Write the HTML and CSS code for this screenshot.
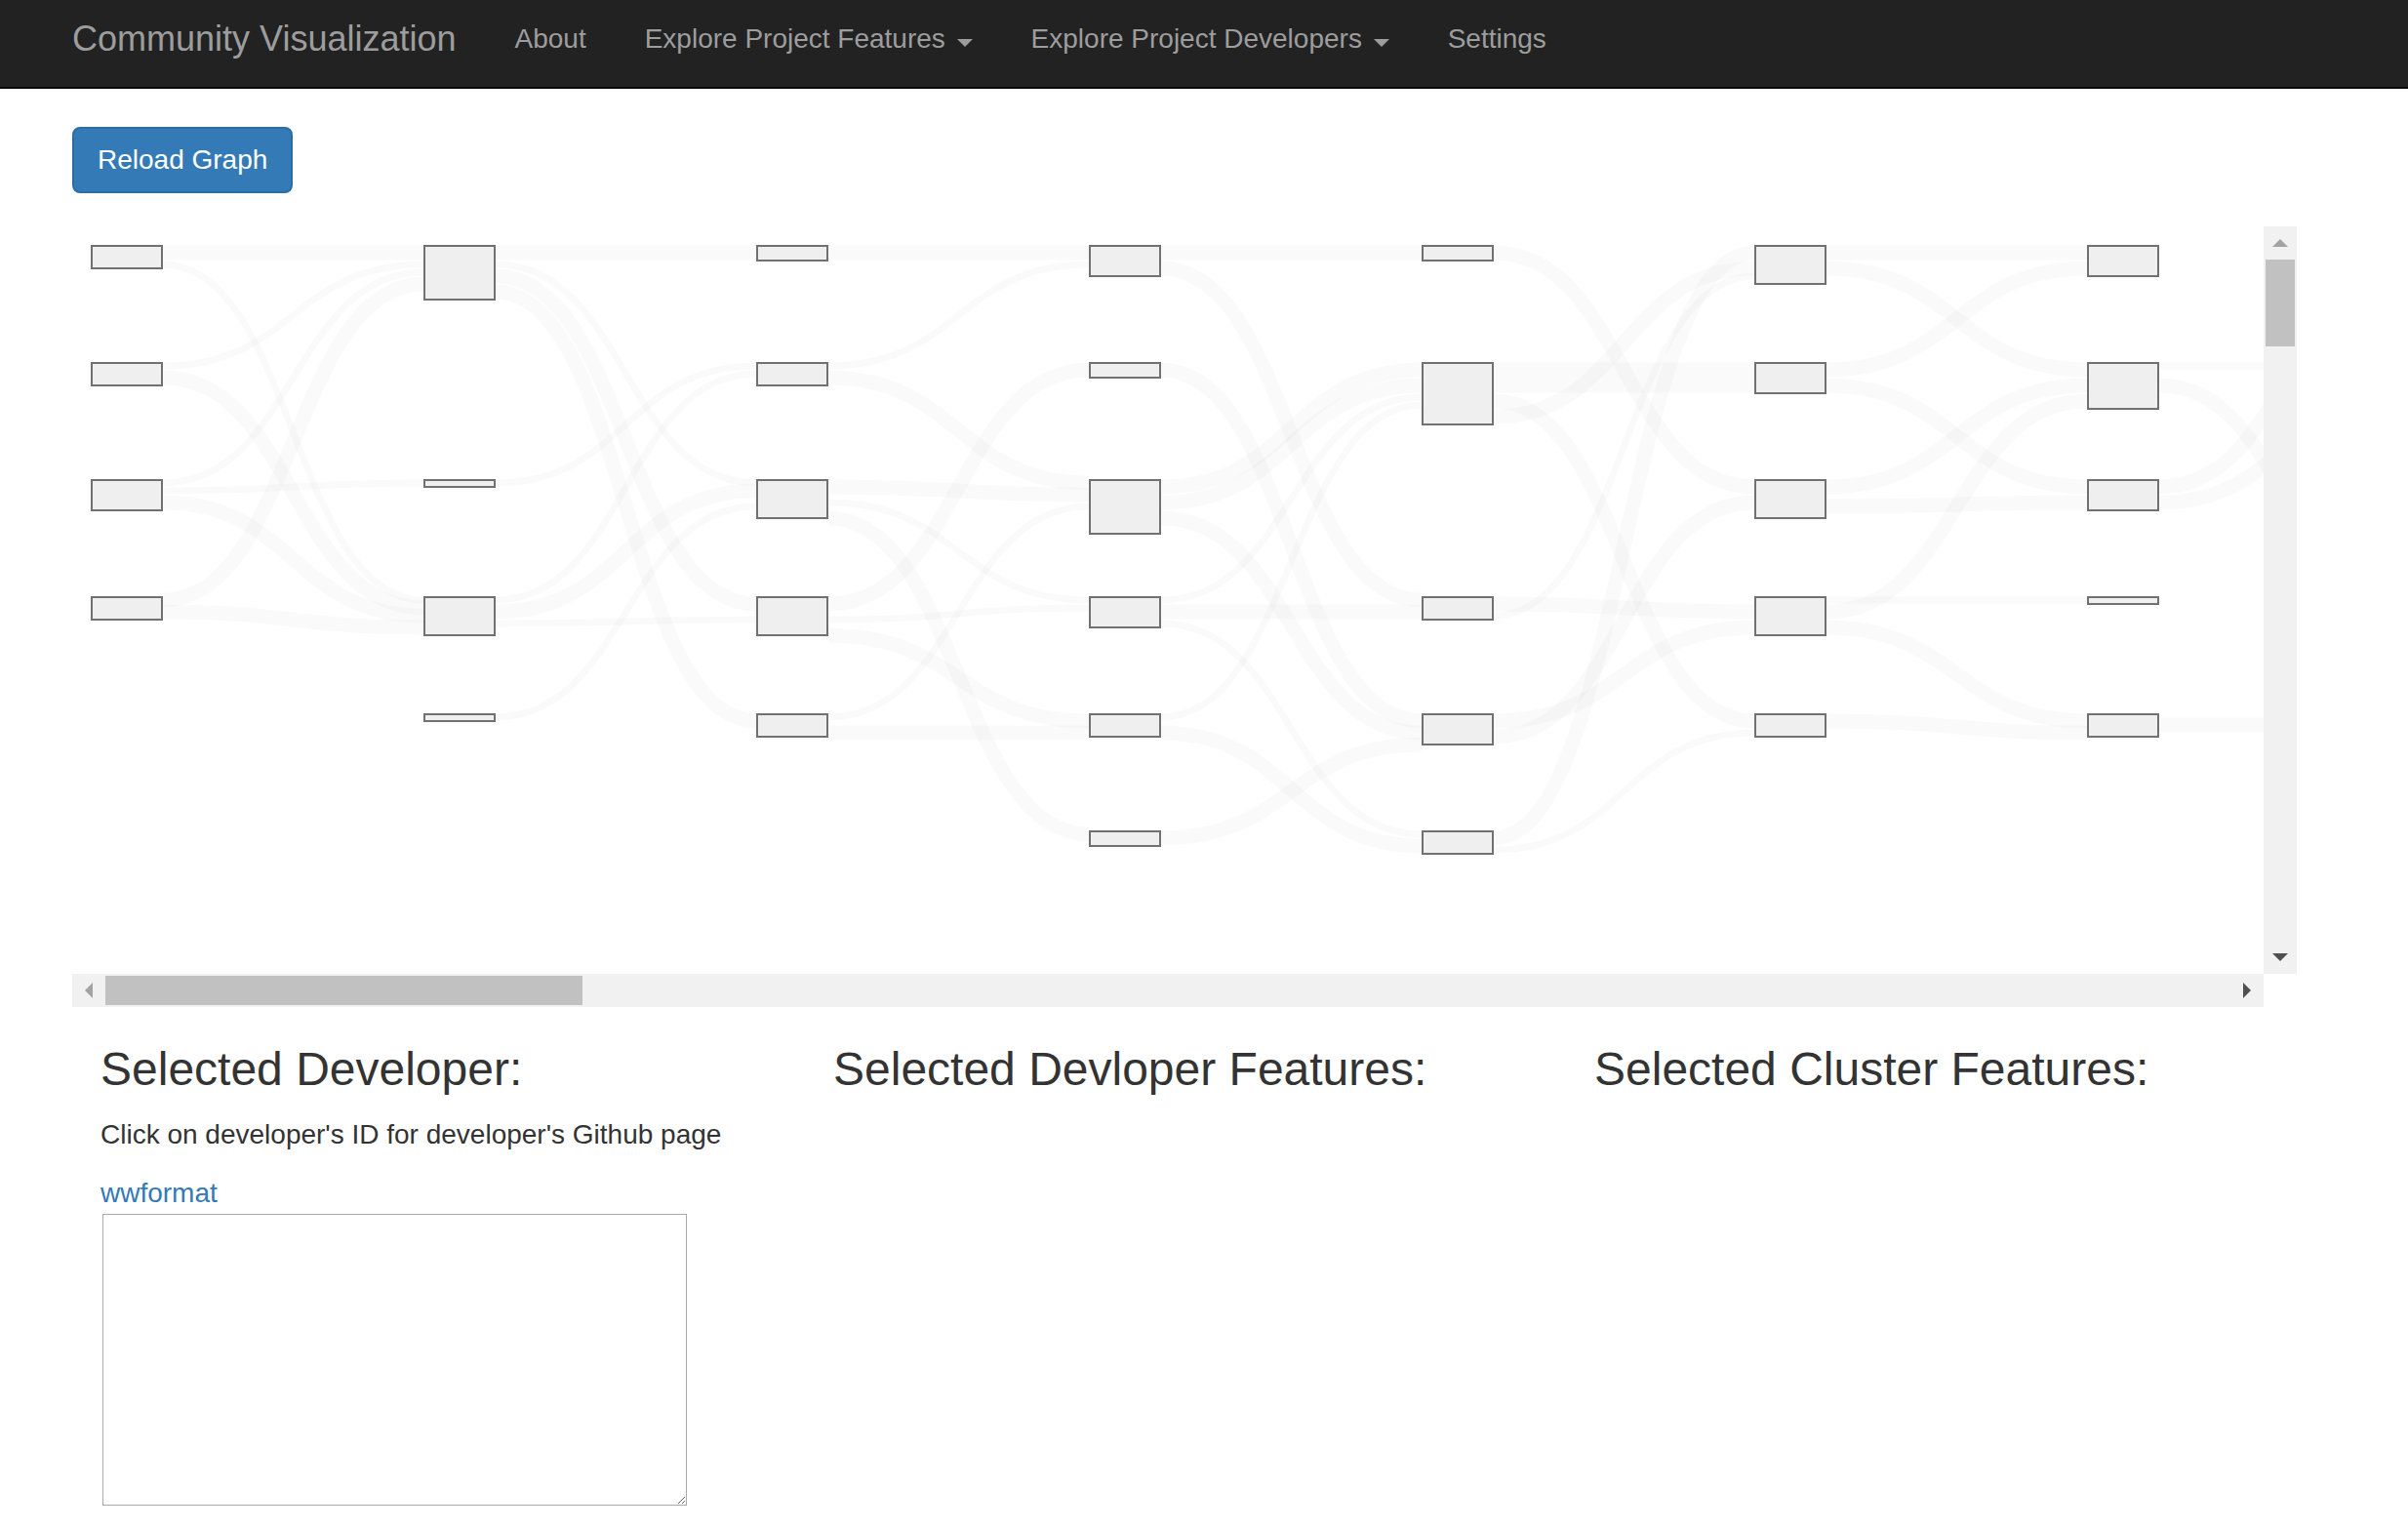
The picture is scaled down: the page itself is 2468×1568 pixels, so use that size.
FILE: index.html
```html
<!DOCTYPE html>
<html lang="en">
<head>
<meta charset="utf-8">
<title>Community Visualization</title>
<link rel="stylesheet" href="styles.css">
</head>
<body>
<nav class="navbar">
  <a class="brand" href="#">Community Visualization</a>
  <ul class="nav">
    <li><a href="#">About</a></li>
    <li><a href="#">Explore Project Features <span class="caret"></span></a></li>
    <li><a href="#">Explore Project Developers <span class="caret"></span></a></li>
    <li><a href="#">Settings</a></li>
  </ul>
</nav>

<main class="main">
  <button class="btn" type="button">Reload Graph</button>

  <div class="graph">
    <div class="viewport">
      <svg class="graph-svg" width="2246" height="766" viewBox="74 232 2246 766">
        <g class="links" fill="none" stroke="#000" stroke-opacity="0.02">
          <path d="M167 259C300.5 259 300.5 259 434 259" stroke-width="15"/>
          <path d="M167 271C300.5 271 300.5 615 434 615" stroke-width="7"/>
          <path d="M167 375C300.5 375 300.5 271 434 271" stroke-width="7"/>
          <path d="M167 387C300.5 387 300.5 623 434 623" stroke-width="15"/>
          <path d="M167 495C300.5 495 300.5 279 434 279" stroke-width="7"/>
          <path d="M167 503C300.5 503 300.5 495 434 495" stroke-width="7"/>
          <path d="M167 515C300.5 515 300.5 631 434 631" stroke-width="15"/>
          <path d="M167 615C300.5 615 300.5 291 434 291" stroke-width="15"/>
          <path d="M167 627C300.5 627 300.5 643 434 643" stroke-width="15"/>

          <path d="M508 259C641.5 259 641.5 259 775 259" stroke-width="15"/>
          <path d="M508 271C641.5 271 641.5 495 775 495" stroke-width="7"/>
          <path d="M508 283C641.5 283 641.5 619 775 619" stroke-width="15"/>
          <path d="M508 299C641.5 299 641.5 739 775 739" stroke-width="15"/>
          <path d="M508 495C641.5 495 641.5 375 775 375" stroke-width="7"/>
          <path d="M508 615C641.5 615 641.5 383 775 383" stroke-width="7"/>
          <path d="M508 627C641.5 627 641.5 503 775 503" stroke-width="15"/>
          <path d="M508 639C641.5 639 641.5 635 775 635" stroke-width="7"/>
          <path d="M508 735C641.5 735 641.5 519 775 519" stroke-width="7"/>

          <path d="M849 259C982.5 259 982.5 259 1116 259" stroke-width="15"/>
          <path d="M849 375C982.5 375 982.5 271 1116 271" stroke-width="7"/>
          <path d="M849 387C982.5 387 982.5 495 1116 495" stroke-width="15"/>
          <path d="M849 499C982.5 499 982.5 507 1116 507" stroke-width="15"/>
          <path d="M849 515C982.5 515 982.5 615 1116 615" stroke-width="7"/>
          <path d="M849 531C982.5 531 982.5 855 1116 855" stroke-width="15"/>
          <path d="M849 619C982.5 619 982.5 379 1116 379" stroke-width="15"/>
          <path d="M849 635C982.5 635 982.5 623 1116 623" stroke-width="7"/>
          <path d="M849 651C982.5 651 982.5 739 1116 739" stroke-width="15"/>
          <path d="M849 735C982.5 735 982.5 519 1116 519" stroke-width="7"/>
          <path d="M849 751C982.5 751 982.5 751 1116 751" stroke-width="15"/>

          <path d="M1190 259C1323.5 259 1323.5 259 1457 259" stroke-width="15"/>
          <path d="M1190 275C1323.5 275 1323.5 615 1457 615" stroke-width="15"/>
          <path d="M1190 379C1323.5 379 1323.5 739 1457 739" stroke-width="15"/>
          <path d="M1190 499C1323.5 499 1323.5 379 1457 379" stroke-width="15"/>
          <path d="M1190 515C1323.5 515 1323.5 395 1457 395" stroke-width="15"/>
          <path d="M1190 531C1323.5 531 1323.5 751 1457 751" stroke-width="15"/>
          <path d="M1190 615C1323.5 615 1323.5 407 1457 407" stroke-width="7"/>
          <path d="M1190 627C1323.5 627 1323.5 627 1457 627" stroke-width="15"/>
          <path d="M1190 639C1323.5 639 1323.5 855 1457 855" stroke-width="7"/>
          <path d="M1190 735C1323.5 735 1323.5 415 1457 415" stroke-width="7"/>
          <path d="M1190 751C1323.5 751 1323.5 867 1457 867" stroke-width="15"/>
          <path d="M1190 859C1323.5 859 1323.5 763 1457 763" stroke-width="15"/>

          <path d="M1531 259C1664.5 259 1664.5 499 1798 499" stroke-width="15"/>
          <path d="M1531 387C1664.5 387 1664.5 387 1798 387" stroke-width="31"/>
          <path d="M1531 411C1664.5 411 1664.5 739 1798 739" stroke-width="15"/>
          <path d="M1531 427C1664.5 427 1664.5 275 1798 275" stroke-width="15"/>
          <path d="M1531 619C1664.5 619 1664.5 627 1798 627" stroke-width="15"/>
          <path d="M1531 631C1664.5 631 1664.5 283 1798 283" stroke-width="7"/>
          <path d="M1531 739C1664.5 739 1664.5 643 1798 643" stroke-width="15"/>
          <path d="M1531 755C1664.5 755 1664.5 515 1798 515" stroke-width="15"/>
          <path d="M1531 859C1664.5 859 1664.5 259 1798 259" stroke-width="15"/>
          <path d="M1531 871C1664.5 871 1664.5 751 1798 751" stroke-width="7"/>

          <path d="M1872 259C2005.5 259 2005.5 259 2139 259" stroke-width="15"/>
          <path d="M1872 275C2005.5 275 2005.5 379 2139 379" stroke-width="15"/>
          <path d="M1872 379C2005.5 379 2005.5 275 2139 275" stroke-width="15"/>
          <path d="M1872 395C2005.5 395 2005.5 499 2139 499" stroke-width="15"/>
          <path d="M1872 499C2005.5 499 2005.5 395 2139 395" stroke-width="15"/>
          <path d="M1872 519C2005.5 519 2005.5 515 2139 515" stroke-width="15"/>
          <path d="M1872 615C2005.5 615 2005.5 615 2139 615" stroke-width="7"/>
          <path d="M1872 627C2005.5 627 2005.5 411 2139 411" stroke-width="15"/>
          <path d="M1872 643C2005.5 643 2005.5 739 2139 739" stroke-width="15"/>
          <path d="M1872 739C2005.5 739 2005.5 751 2139 751" stroke-width="15"/>

          <path d="M2213 375C2346.5 375 2346.5 375 2480 375" stroke-width="7"/>
          <path d="M2213 499C2346.5 499 2346.5 267 2480 267" stroke-width="15"/>
          <path d="M2213 515C2346.5 515 2346.5 395 2480 395" stroke-width="15"/>
          <path d="M2213 395C2346.5 395 2346.5 640 2480 640" stroke-width="15"/>
          <path d="M2213 743C2346.5 743 2346.5 743 2480 743" stroke-width="15"/>
        </g>
        <g class="nodes" fill="#efefef" stroke="#717171" stroke-width="2">
          <rect x="94" y="252" width="72" height="23"/>
          <rect x="94" y="372" width="72" height="23"/>
          <rect x="94" y="492" width="72" height="31"/>
          <rect x="94" y="612" width="72" height="23"/>

          <rect x="435" y="252" width="72" height="55"/>
          <rect x="435" y="492" width="72" height="7"/>
          <rect x="435" y="612" width="72" height="39"/>
          <rect x="435" y="732" width="72" height="7"/>

          <rect x="776" y="252" width="72" height="15"/>
          <rect x="776" y="372" width="72" height="23"/>
          <rect x="776" y="492" width="72" height="39"/>
          <rect x="776" y="612" width="72" height="39"/>
          <rect x="776" y="732" width="72" height="23"/>

          <rect x="1117" y="252" width="72" height="31"/>
          <rect x="1117" y="372" width="72" height="15"/>
          <rect x="1117" y="492" width="72" height="55"/>
          <rect x="1117" y="612" width="72" height="31"/>
          <rect x="1117" y="732" width="72" height="23"/>
          <rect x="1117" y="852" width="72" height="15"/>

          <rect x="1458" y="252" width="72" height="15"/>
          <rect x="1458" y="372" width="72" height="63"/>
          <rect x="1458" y="612" width="72" height="23"/>
          <rect x="1458" y="732" width="72" height="31"/>
          <rect x="1458" y="852" width="72" height="23"/>

          <rect x="1799" y="252" width="72" height="39"/>
          <rect x="1799" y="372" width="72" height="31"/>
          <rect x="1799" y="492" width="72" height="39"/>
          <rect x="1799" y="612" width="72" height="39"/>
          <rect x="1799" y="732" width="72" height="23"/>

          <rect x="2140" y="252" width="72" height="31"/>
          <rect x="2140" y="372" width="72" height="47"/>
          <rect x="2140" y="492" width="72" height="31"/>
          <rect x="2140" y="612" width="72" height="7"/>
          <rect x="2140" y="732" width="72" height="23"/>
        </g>
      </svg>
    </div>
    <div class="vbar">
      <div class="sbtn"><span class="arrow arrow-up"></span></div>
      <div class="vthumb"></div>
      <div class="vtrack"></div>
      <div class="sbtn"><span class="arrow arrow-down"></span></div>
    </div>
    <div class="hbar">
      <div class="sbtn"><span class="arrow arrow-left"></span></div>
      <div class="hthumb"></div>
      <div class="htrack"></div>
      <div class="sbtn"><span class="arrow arrow-right"></span></div>
    </div>
    <div class="corner"></div>
  </div>

  <section class="panels">
    <div class="panel">
      <h3>Selected Developer:</h3>
      <p>Click on developer's ID for developer's Github page</p>
      <a class="dev-link" href="#">wwformat</a>
      <textarea class="dev-notes"></textarea>
    </div>
    <div class="panel">
      <h3>Selected Devloper Features:</h3>
    </div>
    <div class="panel">
      <h3>Selected Cluster Features:</h3>
    </div>
  </section>
</main>
</body>
</html>
```

FILE: styles.css
```css
html, body {
  margin: 0;
  padding: 0;
  background: #fff;
}

body {
  font-family: "Liberation Sans", Arial, Helvetica, sans-serif;
  font-size: 28px;
  line-height: 40px;
  color: #333;
  overflow: hidden;
}

/* Navbar */
.navbar {
  display: flex;
  align-items: flex-start;
  height: 69px;
  padding: 20px 0 0 44px;
  background: #222;
  border-bottom: 2px solid #080808;
}

.brand {
  display: block;
  padding: 0 30px;
  font-size: 36px;
  line-height: 40px;
  color: #9d9d9d;
  text-decoration: none;
}

.nav {
  display: flex;
  list-style: none;
  margin: 0;
  padding: 0;
}

.nav a {
  display: block;
  padding: 0 30px;
  font-size: 28px;
  line-height: 40px;
  color: #9d9d9d;
  text-decoration: none;
}

.caret {
  display: inline-block;
  width: 0;
  height: 0;
  margin-left: 4px;
  vertical-align: middle;
  border-top: 8px solid #9d9d9d;
  border-left: 8px solid transparent;
  border-right: 8px solid transparent;
  position: relative;
  top: 2px;
}

/* Main */
.main {
  padding: 39px 0 0 74px;
}

.btn {
  display: block;
  margin: 0;
  padding: 12px 24px;
  font-family: inherit;
  font-size: 28px;
  line-height: 40px;
  color: #fff;
  background: #337ab7;
  border: 2px solid #2e6da4;
  border-radius: 8px;
}

/* Graph with scrollbars */
.graph {
  margin-top: 34px;
  display: grid;
  grid-template-columns: 2246px 34px;
  grid-template-rows: 766px 34px;
}

.viewport {
  overflow: hidden;
  background: #fff;
}

.graph-svg {
  display: block;
}

.vbar {
  display: flex;
  flex-direction: column;
  background: #f1f1f1;
}

.hbar {
  display: flex;
  background: #f1f1f1;
}

.sbtn {
  flex: none;
  width: 34px;
  height: 34px;
  display: flex;
  align-items: center;
  justify-content: center;
}

.vthumb {
  flex: none;
  height: 89px;
  margin: 0 2px;
  background: #c1c1c1;
}

.vtrack,
.htrack {
  flex: 1;
}

.hthumb {
  flex: none;
  width: 489px;
  margin: 2px 0;
  background: #c1c1c1;
}

.corner {
  background: #fff;
}

.arrow {
  display: block;
  width: 0;
  height: 0;
}

.arrow-up {
  border-left: 8px solid transparent;
  border-right: 8px solid transparent;
  border-bottom: 8px solid #a3a3a3;
}

.arrow-down {
  border-left: 8px solid transparent;
  border-right: 8px solid transparent;
  border-top: 8px solid #505050;
}

.arrow-left {
  border-top: 8px solid transparent;
  border-bottom: 8px solid transparent;
  border-right: 8px solid #a3a3a3;
}

.arrow-right {
  border-top: 8px solid transparent;
  border-bottom: 8px solid transparent;
  border-left: 8px solid #505050;
}

/* Panels */
.panels {
  display: grid;
  grid-template-columns: 751px 780px 1fr;
  padding-left: 29px;
}

.panels h3 {
  margin: 38px 0 20px;
  font-size: 48px;
  line-height: 52.8px;
  font-weight: 500;
  color: #333;
}

.panels p {
  margin: 0 0 20px;
}

.dev-link {
  display: block;
  color: #337ab7;
  text-decoration: none;
}

.dev-notes {
  display: block;
  box-sizing: border-box;
  width: 599px;
  height: 299px;
  margin: 1px 0 0 2px;
  border: 1px solid #a9a9a9;
  background: #fff;
}
```
